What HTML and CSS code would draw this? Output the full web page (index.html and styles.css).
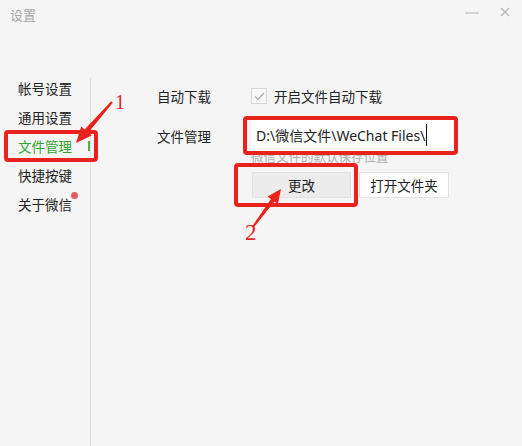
FILE: index.html
```html
<!DOCTYPE html>
<html lang="zh-CN">
<head>
    <meta charset="UTF-8">
    <meta name="viewport" content="width=device-width, initial-scale=1.0">
    <title>设置</title>
    <link rel="stylesheet" href="styles.css">
</head>
<body>
    <div class="window">
        <header class="titlebar">
            <span class="title">设置</span>
            <div class="win-btns">
                <svg class="btn-min" width="16" height="4" viewBox="0 0 16 4"><line x1="1" y1="2" x2="15" y2="2" stroke="#c4c4c4" stroke-width="1.4"/></svg>
                <svg class="btn-close" width="10" height="10" viewBox="0 0 10 10"><path d="M1 1 L9 9 M9 1 L1 9" stroke="#b4b4b4" stroke-width="1.2" fill="none"/></svg>
            </div>
        </header>

        <div class="main">
            <nav class="sidebar">
                <div class="nav-item">帐号设置</div>
                <div class="nav-item">通用设置</div>
                <div class="nav-item active">文件管理</div>
                <div class="nav-item">快捷按键</div>
                <div class="nav-item"><span class="dot-wrap">关于微信</span></div>
            </nav>

            <section class="content">
                <div class="row">
                    <div class="label">自动下载</div>
                    <label class="check">
                        <span class="box">
                            <svg width="11" height="9" viewBox="0 0 11 9"><path d="M1 4.5 L4 7.5 L10 1" stroke="#a8a8a8" stroke-width="1.2" fill="none"/></svg>
                        </span>
                        <span>开启文件自动下载</span>
                    </label>
                </div>

                <div class="row row-path">
                    <div class="label">文件管理</div>
                    <div class="path-field">
                        <div class="path-input">D:\微信文件\WeChat Files\<span class="caret"></span></div>
                        <div class="hint">微信文件的默认保存位置</div>
                        <div class="buttons">
                            <button class="btn btn-change">更改</button>
                            <button class="btn btn-open">打开文件夹</button>
                        </div>
                    </div>
                </div>
            </section>
        </div>

        <!-- 标注 -->
        <div class="mark mark-nav"></div>
        <div class="mark mark-input"></div>
        <div class="mark mark-btn"></div>
        <span class="step step-1">1</span>
        <span class="step step-2">2</span>
        <svg class="arrows" width="522" height="446" viewBox="0 0 522 446">
            <polygon fill="#e8231e" points="112.8,102.7 88.4,132.6 91.8,135.6 76,143 81.2,126.4 84.6,129.4 111.2,101.3"/>
            <polygon fill="#e8231e" points="253.8,227.6 274.5,201.6 277.9,204.2 281,189 267.5,196.4 270.9,199 252.2,226.4"/>
        </svg>
    </div>
</body>
</html>
```

FILE: styles.css
```css
body {
    margin: 0;
    font-family: "Noto Sans CJK SC", "Noto Sans", sans-serif;
    background-color: #f5f5f5;
}

.window {
    position: relative;
    width: 522px;
    height: 446px;
    overflow: hidden;
    background-color: #f5f5f5;
    color: #333;
}

.titlebar {
    height: 78px;
    display: flex;
    justify-content: space-between;
    align-items: flex-start;
}

.title {
    margin: 6px 0 0 10px;
    font-size: 13px;
    line-height: 18px;
    color: #a6a6a6;
}

.win-btns {
    display: flex;
    align-items: center;
    gap: 20px;
    margin: 7px 12px 0 0;
    height: 10px;
}

.btn-min {
    margin-top: 1px;
}

.main {
    display: flex;
    height: 368px;
}

.sidebar {
    width: 90px;
    border-right: 1px solid #dedede;
}

.nav-item {
    position: relative;
    padding-left: 18px;
    height: 20px;
    line-height: 20px;
    margin-bottom: 9px;
    font-size: 13.5px;
    color: #222;
}

.nav-item.active {
    color: #2fa52e;
}

.nav-item.active::after {
    content: "";
    position: absolute;
    right: 0;
    top: 5px;
    width: 2px;
    height: 10px;
    background-color: #47b546;
}

.dot-wrap {
    position: relative;
}

.dot-wrap::after {
    content: "";
    position: absolute;
    right: -6px;
    top: -2px;
    width: 7px;
    height: 7px;
    border-radius: 50%;
    background-color: #e45a66;
}

.content {
    flex: 1;
    padding: 8px 0 0 66px;
}

.row {
    display: flex;
}

.row-path {
    margin-top: 14px;
}

.label {
    width: 94px;
    font-size: 13.5px;
    line-height: 20px;
    color: #222;
}

.row-path .label {
    line-height: 32px;
}

.check {
    display: flex;
    align-items: center;
    gap: 7px;
    font-size: 13.5px;
    line-height: 20px;
    color: #222;
}

.box {
    width: 14px;
    height: 14px;
    border: 1px solid #d6d6d6;
    background-color: #f8f8f8;
    display: flex;
    align-items: center;
    justify-content: center;
}

.path-field {
    display: flex;
    flex-direction: column;
}

.path-input {
    width: 197px;
    height: 32px;
    padding-left: 5px;
    background-color: #fff;
    font-family: "Noto Sans", "Noto Sans CJK SC", sans-serif;
    font-size: 14px;
    line-height: 32px;
    color: #222;
    white-space: nowrap;
}

.caret {
    display: inline-block;
    width: 1px;
    height: 22px;
    margin-left: 1px;
    vertical-align: -5px;
    background-color: #111;
}

.hint {
    margin-top: -2px;
    font-size: 12.5px;
    line-height: 14px;
    color: #b0b0b0;
}

.buttons {
    display: flex;
    gap: 8px;
    margin-top: 8px;
    margin-left: 1px;
}

.btn {
    height: 26px;
    padding: 0;
    font-family: "Noto Sans CJK SC", sans-serif;
    font-size: 13.5px;
    color: #222;
    border: 1px solid #e2e2e2;
    cursor: pointer;
}

.btn-change {
    width: 99px;
    background-color: #ececec;
}

.btn-open {
    width: 90px;
    background-color: #fff;
}

/* annotations */
.mark {
    position: absolute;
    border: 4px solid #e8231e;
    border-radius: 4px;
    box-sizing: border-box;
}

.mark-nav {
    left: 4px;
    top: 130px;
    width: 94px;
    height: 32px;
}

.mark-input {
    left: 243px;
    top: 116px;
    width: 215px;
    height: 39px;
}

.mark-btn {
    left: 234px;
    top: 163px;
    width: 124px;
    height: 44px;
}

.step {
    position: absolute;
    font-family: "Liberation Serif", serif;
    color: #e0261f;
}

.step-1 {
    left: 115px;
    top: 91px;
    font-size: 20px;
    line-height: 22px;
}

.step-2 {
    left: 245px;
    top: 221px;
    font-size: 23px;
    line-height: 24px;
}

.arrows {
    position: absolute;
    left: 0;
    top: 0;
    pointer-events: none;
}
```
